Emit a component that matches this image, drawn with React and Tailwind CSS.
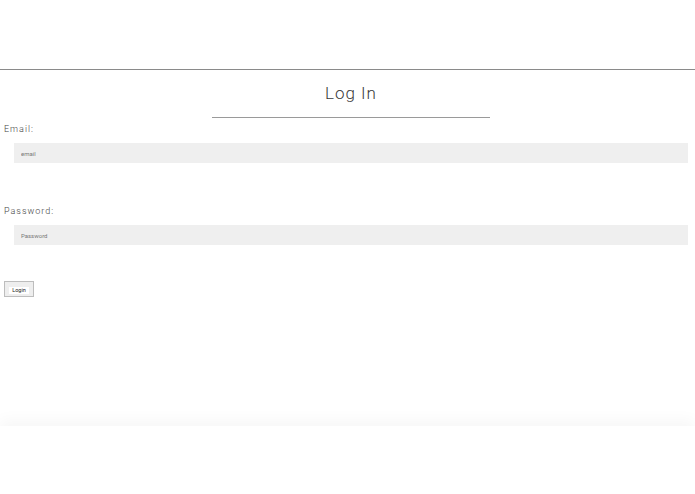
import React from "react"

function Field({ label, placeholder, type }) {
    return (
        <div className="flex flex-col">
            <label className="text-[9px] leading-[12px] font-light tracking-[1px] text-[#444444] pl-[4px]">
                {label}
            </label>
            <input
                type={type}
                placeholder={placeholder}
                className="mt-[8px] ml-[14px] mr-[7px] h-[20px] bg-[#efefef] px-[7px] text-[6px] text-[#555555] placeholder:text-[#777777] outline-none border-none"
            />
        </div>
    )
}

export default function App() {
    return (
        <div className="w-[695px] h-[494px] bg-white font-['Roboto','Liberation_Sans',sans-serif] flex flex-col">
            <header className="h-[70px] shrink-0 border-b border-[#8a8a8a]" />
            <main className="flex-1 flex flex-col">
                <div className="flex flex-col items-center pt-[12px] pl-[7px]">
                    <h1 className="text-[17px] leading-[22px] font-light tracking-[1px] text-[#3a3a3a]">
                        Log In
                    </h1>
                    <div className="mt-[13px] w-[278px] h-px bg-[#9a9a9a]" />
                </div>
                <div className="mt-[5px] flex flex-col">
                    <Field label="Email:" placeholder="email" type="email" />
                    <div className="h-[42px]" />
                    <Field label="Password:" placeholder="Password" type="password" />
                </div>
                <div className="mt-[36px] pl-[4px]">
                    <button className="h-[16px] w-[30px] border border-[#bdbdbd] bg-[#eeeeee] text-[5.5px] text-[#222222] flex items-center justify-center pt-[3px]">
                        <span className="bg-white px-[3px] leading-[7px]">Login</span>
                    </button>
                </div>
            </main>
            <footer className="h-[68px] shrink-0 bg-white shadow-[0_-6px_14px_rgba(0,0,0,0.035)]" />
        </div>
    )
}
